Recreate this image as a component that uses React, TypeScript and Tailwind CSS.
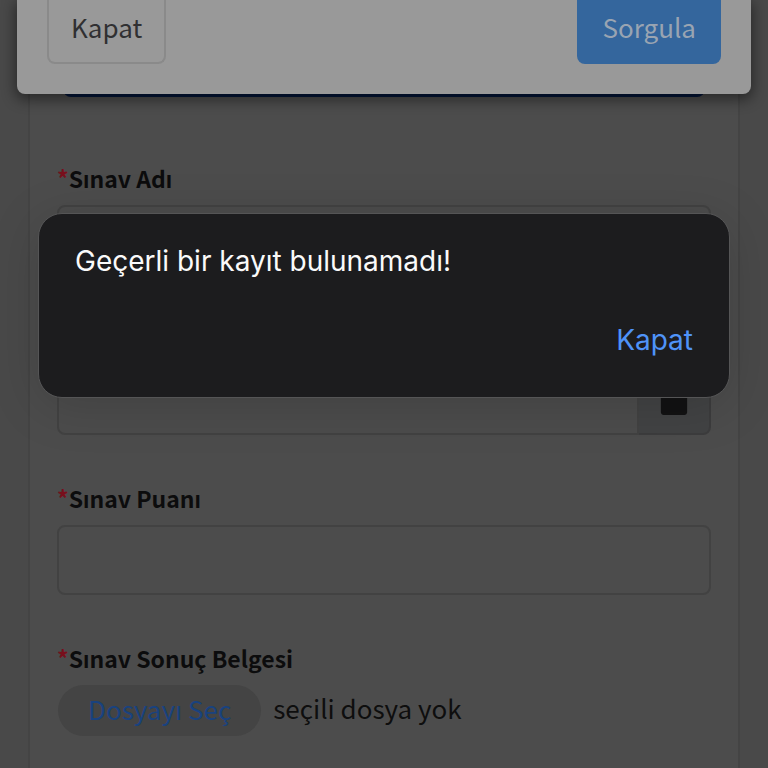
import React, { useState } from 'react'
import { FaCalendar } from 'react-icons/fa'

const inputClass =
  'block h-[70px] w-full min-w-0 border-2 border-[#424242] bg-[#4c4c4c] px-6 text-[26px] text-[#0d0d0d] outline-none'

const FieldLabel = ({ htmlFor, children }: { htmlFor: string; children: React.ReactNode }) => (
  <label htmlFor={htmlFor} className="mb-2.5 block text-[23px] leading-[34px] font-bold text-[#0c0c0d]">
    <span className="text-[#780f1c]">*</span>
    {children}
  </label>
)

const ExamForm = () => {
  const [fileName, setFileName] = useState('')

  return (
    <form className="mx-7 min-h-screen border-x-2 border-[#444444] bg-[#4c4c4c] px-[27px] pt-7 pb-8">
      <div className="px-1.5">
        <button type="button" aria-label="Sorgulama" className="block h-[69px] w-full rounded-lg bg-[#04163a]" />
      </div>

      <div className="mt-16 flex flex-col gap-[46px]">
        <div>
          <FieldLabel htmlFor="exam-name">Sınav Adı</FieldLabel>
          <input id="exam-name" className={`${inputClass} rounded-lg`} />
        </div>

        {/* Date field */}
        <div className="flex pt-11">
          <input id="exam-date" aria-label="Tarih" className={`${inputClass} flex-1 rounded-l-lg`} />
          <button
            type="button"
            aria-label="Takvim"
            className="flex w-[72px] items-center justify-center rounded-r-lg border-2 border-l-0 border-[#3c3c3d] bg-[#424344] text-[#121213]"
          >
            <FaCalendar size={30} />
          </button>
        </div>

        <div>
          <FieldLabel htmlFor="exam-score">Sınav Puanı</FieldLabel>
          <input id="exam-score" className={`${inputClass} rounded-lg`} />
        </div>

        <div>
          <FieldLabel htmlFor="exam-file">Sınav Sonuç Belgesi</FieldLabel>
          <div className="flex items-start gap-3 text-[26px] leading-9">
            <input
              id="exam-file"
              type="file"
              className="sr-only"
              onChange={(e) => setFileName(e.target.files?.[0]?.name ?? '')}
            />
            <label htmlFor="exam-file" className="ml-px rounded-full bg-[#444444] px-[30px] pt-1.5 pb-[9px] text-[#19427f]">
              Dosyayı Seç
            </label>
            <span className="pt-[5px] text-[#0e0e0e]">{fileName || 'seçili dosya yok'}</span>
          </div>
        </div>
      </div>
    </form>
  )
}

const QueryModal = () => (
  <div className="absolute inset-x-[17px] top-0 flex justify-between rounded-b-lg bg-[#999999] px-[30px] pb-[30px] text-[26px] leading-9 shadow-[0_4px_14px_2px_rgba(0,0,0,0.45)]">
    <button type="button" className="rounded-b-lg border-2 border-t-0 border-[#8a8a8a] px-[22px] pt-[9px] pb-[17px] text-[#303032]">
      Kapat
    </button>
    <button type="button" className="rounded-b-lg bg-[#34669d] px-[25px] pt-[9px] pb-[19px] text-[#99a4b2]">
      Sorgula
    </button>
  </div>
)

const AlertBox = ({ message, onClose }: { message: string; onClose: () => void }) => (
  <div
    role="alertdialog"
    aria-label={message}
    className="absolute inset-x-[38px] top-[213px] rounded-[24px] border border-[#555556] bg-[#1c1c1e] px-9 pt-[27px] pb-[37px] font-['Inter',sans-serif] text-[28px] leading-10 shadow-[0_8px_50px_rgba(0,0,0,0.15)]"
  >
    <p className="text-[#fafafa]">{message}</p>
    <div className="mt-[39px] flex justify-end">
      <button type="button" onClick={onClose} className="text-[#4f93f8]">
        Kapat
      </button>
    </div>
  </div>
)

const App: React.FC = () => {
  const [open, setOpen] = useState(true)

  return (
    <div className="relative min-h-screen overflow-hidden bg-[#494949] font-['Noto_Sans_CJK_SC',sans-serif]">
      <ExamForm />
      <QueryModal />
      {open && <AlertBox message="Geçerli bir kayıt bulunamadı!" onClose={() => setOpen(false)} />}
    </div>
  )
}

export default App
